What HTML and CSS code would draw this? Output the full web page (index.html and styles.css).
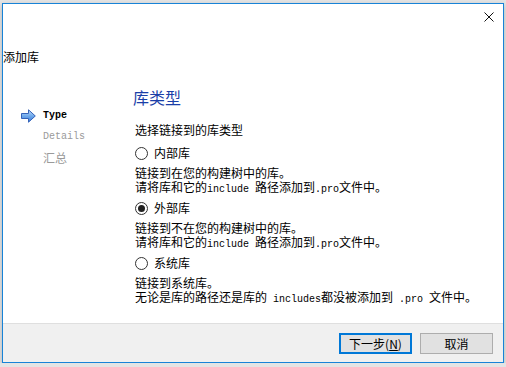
FILE: index.html
```html
<!DOCTYPE html>
<html lang="zh-CN">
<head>
    <meta charset="UTF-8">
    <title>添加库</title>
    <link rel="stylesheet" href="styles.css">
</head>
<body>
    <div class="window">
        <div class="titlebar">
            <button class="close" aria-label="关闭">
                <svg width="10" height="10" viewBox="0 0 10 10">
                    <path d="M0.5 0.5 L9.5 9.5 M9.5 0.5 L0.5 9.5" stroke="#111" stroke-width="1" fill="none"/>
                </svg>
            </button>
        </div>
        <div class="caption">添加库</div>

        <div class="wizard">
            <ul class="steps">
                <li class="step current">
                    <span class="marker">
                        <svg width="15" height="14" viewBox="0 0 15 14">
                            <defs>
                                <linearGradient id="arrowFill" x1="0" y1="0" x2="0" y2="1">
                                    <stop offset="0" stop-color="#c4e0fb"/>
                                    <stop offset="0.5" stop-color="#6fa9ec"/>
                                    <stop offset="1" stop-color="#3b7bd6"/>
                                </linearGradient>
                            </defs>
                            <path d="M0.5 4.5 H7.5 V0.8 L14.3 7 L7.5 13.2 V9.5 H0.5 Z" fill="url(#arrowFill)" stroke="#3562b8" stroke-width="1"/>
                        </svg>
                    </span>Type
                </li>
                <li class="step"><span class="marker"></span>Details</li>
                <li class="step"><span class="marker"></span>汇总</li>
            </ul>

            <div class="page">
                <h2 class="page-title">库类型</h2>
                <p class="subtitle">选择链接到的库类型</p>

                <label class="option"><span class="radio"></span>内部库</label>
                <div class="desc">
                    <span class="line">链接到在您的构建树中的库。</span>
                    <span class="line">请将库和它的<span class="latin">include </span>路径添加到<span class="latin">.pro</span>文件中。</span>
                </div>

                <label class="option"><span class="radio checked"></span>外部库</label>
                <div class="desc">
                    <span class="line">链接到不在您的构建树中的库。</span>
                    <span class="line">请将库和它的<span class="latin">include </span>路径添加到<span class="latin">.pro</span>文件中。</span>
                </div>

                <label class="option"><span class="radio"></span>系统库</label>
                <div class="desc">
                    <span class="line">链接到系统库。</span>
                    <span class="line">无论是库的路径还是库的<span class="latin"> includes</span>都没被添加到<span class="latin"> .pro </span>文件中。</span>
                </div>
            </div>
        </div>

        <div class="footer">
            <button class="btn default">下一步(<u>N</u>)</button>
            <button class="btn">取消</button>
        </div>
    </div>
</body>
</html>
```

FILE: styles.css
```css
body {
    margin: 0;
    background: #e4e4e4;
    font-family: "Noto Sans CJK SC", "Liberation Sans", sans-serif;
    font-size: 12px;
    color: #000;
}
.window {
    margin: 3px 0 0 2px;
    width: 500px;
    height: 358px;
    border: 1px solid #1883d7;
    background: white;
    display: flex;
    flex-direction: column;
    box-shadow: 0 2px 5px rgba(0,0,0,0.22);
}
.titlebar {
    height: 28px;
    display: flex;
    justify-content: flex-end;
}
.close {
    border: none;
    background: none;
    padding: 0;
    margin: 8px 9px 0 0;
    width: 10px;
    height: 10px;
    display: flex;
}
.caption {
    margin-top: 17px;
    line-height: 16px;
    height: 16px;
}
.wizard {
    flex: 1;
    display: grid;
    grid-template-columns: 130px 1fr;
    margin-top: 22px;
}
.steps {
    list-style: none;
    margin: 0;
    padding: 18px 0 0 18px;
}
.step {
    display: flex;
    align-items: center;
    height: 21px;
    font-family: "Liberation Mono", "Noto Sans CJK SC", monospace;
    font-size: 10px;
    color: #9a9a9a;
}
.step.current {
    color: #000;
    font-weight: bold;
}
.step:last-child {
    font-family: "Noto Sans CJK SC", sans-serif;
    font-size: 12px;
}
.marker {
    width: 22px;
    height: 14px;
    display: flex;
}
.page {
    padding-left: 2px;
}
.page-title {
    margin: 0 0 0 -2px;
    font-size: 16px;
    font-weight: normal;
    line-height: 20px;
    color: #1a3ea8;
}
.subtitle {
    margin: 15px 0 0 0;
    line-height: 16px;
}
.option {
    display: flex;
    align-items: center;
    gap: 6px;
    margin-top: 7px;
    line-height: 16px;
    height: 16px;
}
.desc + .option {
    margin-top: 6px;
}
.radio {
    width: 11px;
    height: 11px;
    border: 1px solid #333;
    border-radius: 50%;
    background: white;
    display: flex;
    align-items: center;
    justify-content: center;
}
.radio.checked::after {
    content: "";
    width: 7px;
    height: 7px;
    border-radius: 50%;
    background: #222;
}
.desc {
    margin-top: 5px;
}
.line {
    display: block;
    height: 14px;
    line-height: 14px;
    white-space: nowrap;
}
.latin {
    font-family: "Liberation Mono", monospace;
    font-size: 10px;
    line-height: 10px;
}
.footer {
    height: 39px;
    border-top: 1px solid #dfdfdf;
    background: #f0f0f0;
    display: flex;
    justify-content: flex-end;
    align-items: flex-start;
    gap: 8px;
    padding: 9px 10px 0 0;
    box-sizing: border-box;
}
.btn {
    width: 73px;
    height: 21px;
    border: 1px solid #adadad;
    background: #e1e1e1;
    font-family: "Noto Sans CJK SC", sans-serif;
    font-size: 12px;
    padding: 0;
    color: #000;
}
.btn.default {
    border: 2px solid #0078d7;
}
.btn u {
    text-decoration-thickness: 1px;
}
```
